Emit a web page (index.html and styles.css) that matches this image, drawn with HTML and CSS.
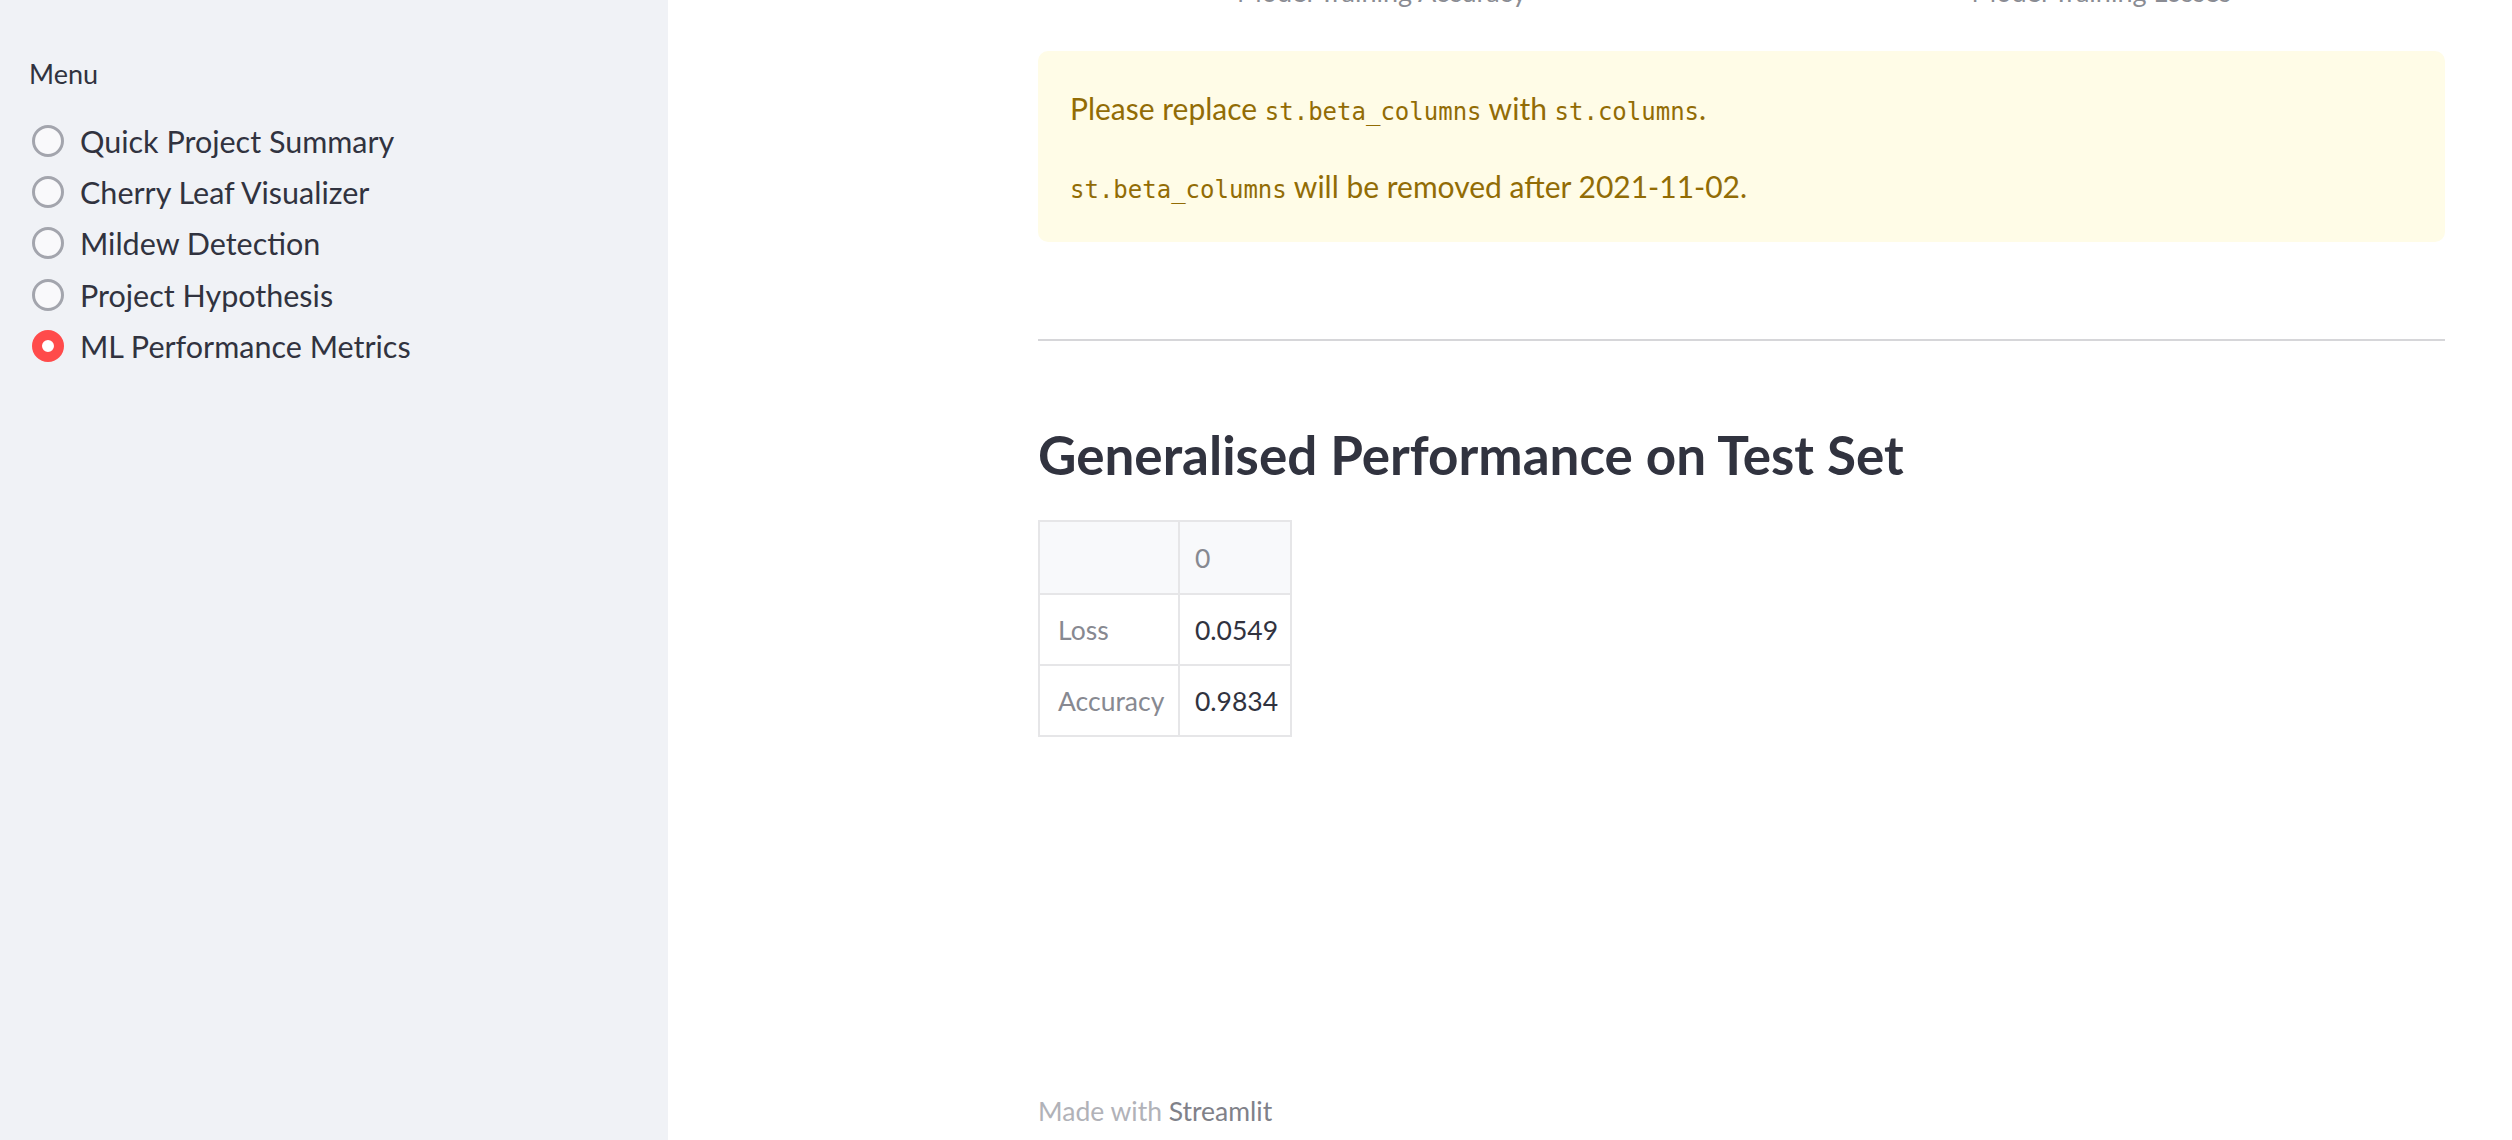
FILE: index.html
```html
<!DOCTYPE html>
<html>
<head>
<meta charset="utf-8">
<link rel="stylesheet" href="styles.css">
</head>
<body>
<aside class="sidebar">
  <div class="menu-label">Menu</div>
  <div class="radio-group">
    <div class="radio-row"><span class="radio"></span><span class="radio-text">Quick Project Summary</span></div>
    <div class="radio-row"><span class="radio"></span><span class="radio-text">Cherry Leaf Visualizer</span></div>
    <div class="radio-row"><span class="radio"></span><span class="radio-text">Mildew Detection</span></div>
    <div class="radio-row"><span class="radio"></span><span class="radio-text">Project Hypothesis</span></div>
    <div class="radio-row"><span class="radio checked"></span><span class="radio-text">ML Performance Metrics</span></div>
  </div>
</aside>
<main class="main">
  <div class="captions">
    <div class="caption">Model Training Accuracy</div>
    <div class="caption">Model Training Losses</div>
  </div>
  <div class="alert">
    <p class="alert-p first">Please replace <code>st.beta_columns</code> with <code>st.columns</code>.</p>
    <p class="alert-p"><code>st.beta_columns</code> will be removed after 2021-11-02.</p>
  </div>
  <hr class="divider">
  <h2 class="heading">Generalised Performance on Test Set</h2>
  <table class="df">
    <colgroup><col class="c1"><col class="c2"></colgroup>
    <thead>
      <tr><th class="corner"></th><th class="col-head">0</th></tr>
    </thead>
    <tbody>
      <tr><th class="idx">Loss</th><td class="val">0.0549</td></tr>
      <tr><th class="idx">Accuracy</th><td class="val">0.9834</td></tr>
    </tbody>
  </table>
  <div class="spacer"></div>
  <footer class="footer">Made with <span class="brand">Streamlit</span></footer>
</main>
</body>
</html>
```
FILE: styles.css
```css
html, body {
  margin: 0;
  padding: 0;
  height: 1140px;
  overflow: hidden;
  background: #ffffff;
}
body {
  display: flex;
  font-family: Lato, "Noto Sans", sans-serif;
  color: #31333f;
}
.sidebar {
  width: 668px;
  flex: 0 0 668px;
  background: #f0f2f6;
  padding: 54px 0 0 29px;
  box-sizing: border-box;
}
.menu-label {
  font-size: 27px;
  line-height: 40px;
  color: #31333f;
  margin-bottom: 21px;
}
.radio-group {
  display: flex;
  flex-direction: column;
  padding-left: 3px;
}
.radio-row {
  display: flex;
  align-items: center;
  height: 51.3px;
}
.radio {
  width: 32px;
  height: 32px;
  box-sizing: border-box;
  border-radius: 50%;
  border: 3.5px solid #a3a5ad;
  background: #f9f9fb;
  flex: 0 0 32px;
}
.radio.checked {
  border: 10px solid #ff4b4b;
  background: #ffffff;
}
.radio-text {
  margin-left: 16px;
  font-size: 30.5px;
  color: #31333f;
}
.main {
  flex: 1;
  padding: 0 67px 0 370px;
  display: flex;
  flex-direction: column;
}
.captions {
  display: grid;
  grid-template-columns: 1fr 1fr;
  column-gap: 32px;
  margin-top: -28px;
}
.caption {
  text-align: center;
  font-size: 27px;
  line-height: 40px;
  color: #8a8c93;
}
.alert {
  margin-top: 39px;
  background: #fffce7;
  border-radius: 10px;
  padding: 32px 32px 0 32px;
  height: 191px;
  box-sizing: border-box;
  color: #926c05;
}
.alert-p {
  margin: 0;
  font-size: 30px;
  line-height: 51px;
}
.alert-p.first {
  margin-bottom: 23px;
}
code {
  font-family: "DejaVu Sans Mono", "Liberation Mono", monospace;
  font-size: 24px;
}
.divider {
  margin: 97px 0 0 0;
  border: 0;
  height: 2px;
  background: #d6d6d9;
}
.heading {
  margin: 78px 0 0 0;
  font-size: 53px;
  font-weight: 700;
  line-height: 72px;
  color: #31333f;
}
.df {
  align-self: flex-start;
  margin-top: 29px;
  border-collapse: collapse;
  table-layout: fixed;
  width: 252px;
  font-size: 26.5px;
  border: 2px solid #e6e6e8;
}
.c1 { width: 140px; }
.c2 { width: 112px; }
.df th, .df td {
  border: 2px solid #e6e6e8;
  text-align: left;
  font-weight: 400;
  padding: 0 0 0 18px;
  white-space: nowrap;
}
.df thead th {
  background: #f8f9fb;
  height: 71px;
}
.df tbody th, .df tbody td {
  height: 69px;
}
.col-head { color: #878991; padding-left: 15px !important; }
.idx { color: #878991; }
.val { color: #31333f; padding-left: 15px !important; }
.spacer { flex: 1; }
.footer {
  font-size: 26.5px;
  line-height: 40px;
  color: #b1b2b8;
  margin-bottom: 9px;
}
.brand { color: #808189; }
```
